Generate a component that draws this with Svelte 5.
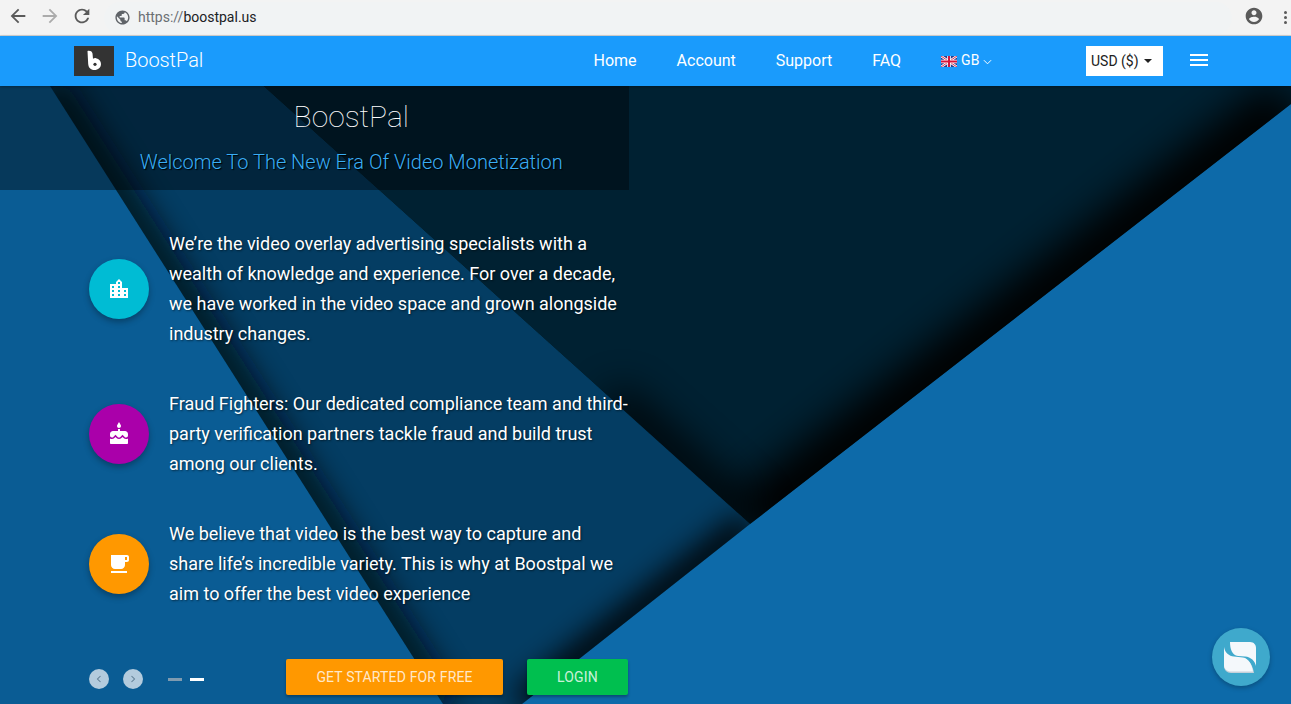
<script>
  const items = [
    {
      color: 'cyan',
      icon: 'M15 11V5l-3-3-3 3v2H3v14h18V11h-6zm-8 8H5v-2h2v2zm0-4H5v-2h2v2zm0-4H5V9h2v2zm6 8h-2v-2h2v2zm0-4h-2v-2h2v2zm0-4h-2V9h2v2zm0-4h-2V5h2v2zm6 12h-2v-2h2v2zm0-4h-2v-2h2v2z',
      text: 'We’re the video overlay advertising specialists with a wealth of knowledge and experience. For over a decade, we have worked in the video space and grown alongside industry changes.'
    },
    {
      color: 'purple',
      icon: 'M12 6c1.11 0 2-.9 2-2 0-.38-.1-.73-.29-1.03L12 0l-1.71 2.97c-.19.3-.29.65-.29 1.03 0 1.1.9 2 2 2zm4.6 9.99l-1.07-1.07-1.08 1.07c-1.3 1.3-3.58 1.31-4.89 0l-1.07-1.07-1.09 1.07C6.75 16.64 5.88 17 4.96 17c-.73 0-1.4-.23-1.96-.61V21c0 .55.45 1 1 1h16c.55 0 1-.45 1-1v-4.61c-.56.38-1.23.61-1.96.61-.92 0-1.79-.36-2.44-1.01zM18 9h-5V7h-2v2H6c-1.66 0-3 1.34-3 3v1.54c0 1.08.88 1.96 1.96 1.96.52 0 1.02-.2 1.38-.57l2.14-2.13 2.13 2.13c.74.74 2.03.74 2.77 0l2.14-2.13 2.13 2.13c.37.37.86.57 1.38.57 1.08 0 1.96-.88 1.96-1.96V12C21 10.34 19.66 9 18 9z',
      text: 'Fraud Fighters: Our dedicated compliance team and third-party verification partners tackle fraud and build trust among our clients.'
    },
    {
      color: 'orange',
      icon: 'M20 3H4v10c0 2.21 1.79 4 4 4h6c2.21 0 4-1.79 4-4v-3h2c1.11 0 2-.9 2-2V5c0-1.11-.89-2-2-2zm0 5h-2V5h2v3zM4 19h16v2H4z',
      text: 'We believe that video is the best way to capture and share life’s incredible variety. This is why at Boostpal we aim to offer the best video experience'
    }
  ];
  const links = ['Home', 'Account', 'Support', 'FAQ'];
</script>

<div class="page">
  <div class="toolbar">
    <svg class="tb-icon" viewBox="0 0 24 24"><path fill="#5a5a5a" d="M20 11H7.83l5.59-5.59L12 4l-8 8 8 8 1.41-1.41L7.83 13H20v-2z"/></svg>
    <svg class="tb-icon" viewBox="0 0 24 24"><path fill="#ababab" d="M4 11h12.17l-5.59-5.59L12 4l8 8-8 8-1.41-1.41L16.17 13H4v-2z"/></svg>
    <svg class="tb-icon" viewBox="0 0 24 24"><path fill="#5a5a5a" d="M17.65 6.35C16.2 4.9 14.21 4 12 4c-4.42 0-7.99 3.58-7.99 8s3.57 8 7.99 8c3.73 0 6.84-2.55 7.73-6h-2.08c-.82 2.33-3.04 4-5.65 4-3.31 0-6-2.69-6-6s2.69-6 6-6c1.66 0 3.14.69 4.22 1.78L13 11h7V4l-2.35 2.35z"/></svg>
    <div class="omnibox">
      <svg class="globe" viewBox="0 0 24 24"><path fill="#5f6368" d="M12 2C6.48 2 2 6.48 2 12s4.48 10 10 10 10-4.48 10-10S17.52 2 12 2zm-1 17.93c-3.95-.49-7-3.85-7-7.93 0-.62.08-1.21.21-1.79L9 15v1c0 1.1.9 2 2 2v1.93zm6.9-2.54c-.26-.81-1-1.39-1.9-1.39h-1v-3c0-.55-.45-1-1-1H8v-2h2c.55 0 1-.45 1-1V7h2c1.1 0 2-.9 2-2v-.41c2.93 1.19 5 4.06 5 7.41 0 2.08-.8 3.97-2.1 5.39z"/></svg>
      <span class="url"><span class="scheme">https://</span>boostpal.us</span>
    </div>
    <svg class="account" viewBox="0 0 24 24"><path fill="#5a5a5a" d="M12 2C6.48 2 2 6.48 2 12s4.48 10 10 10 10-4.48 10-10S17.52 2 12 2zm0 3c1.66 0 3 1.34 3 3s-1.34 3-3 3-3-1.34-3-3 1.34-3 3-3zm0 14.2c-2.5 0-4.71-1.28-6-3.22.03-1.99 4-3.08 6-3.08 1.99 0 5.97 1.09 6 3.08-1.29 1.94-3.5 3.22-6 3.22z"/></svg>
    <div class="dots"><i></i><i></i><i></i></div>
  </div>

  <nav class="nav">
    <div class="logo">
      <svg viewBox="0 0 40 30" width="40" height="30">
        <path fill="#fff" d="M13.500 5C15.500 4.500 18 5 18.500 7.500L19 12.700C20 12.200 21 12 22 12.200C25 12.700 27 15 27 18C27 21.500 24 24 20.500 24C16.500 24 14.500 21.500 14.200 18Z"/>
        <circle cx="21" cy="18.300" r="1.600" fill="#333"/>
      </svg>
    </div>
    <span class="brand">BoostPal</span>
    <div class="links">
      {#each links as link}
        <span>{link}</span>
      {/each}
      <span class="lang">
        <svg class="flag" viewBox="0 0 16 11" width="16" height="11">
          <rect width="16" height="11" fill="#2b3a8c"/>
          <path d="M0 0L16 11M16 0L0 11" stroke="#fff" stroke-width="2.400"/>
          <path d="M0 0L16 11M16 0L0 11" stroke="#d8143a" stroke-width="0.900"/>
          <path d="M8 0V11M0 5.500H16" stroke="#fff" stroke-width="3.600"/>
          <path d="M8 0V11M0 5.500H16" stroke="#d8143a" stroke-width="2"/>
        </svg>
        GB
        <svg class="chev" viewBox="0 0 10 6" width="9" height="6"><path d="M1 1l4 4 4-4" fill="none" stroke="#fff" stroke-width="1.100"/></svg>
      </span>
    </div>
    <div class="currency">USD ($)<i class="caret"></i></div>
    <div class="burger"><i></i><i></i><i></i></div>
  </nav>

  <main class="hero">
    <svg class="backdrop" viewBox="0 0 1291 618" width="1291" height="618">
      <defs>
        <filter id="blur-lg" filterUnits="userSpaceOnUse" x="-100" y="-100" width="1500" height="900">
          <feGaussianBlur stdDeviation="20"/>
        </filter>
        <filter id="blur-md" filterUnits="userSpaceOnUse" x="-100" y="-100" width="1500" height="900">
          <feGaussianBlur stdDeviation="15"/>
        </filter>
        <clipPath id="clip-dark"><polygon points="263,0 750,438 1291,18 1291,0"/></clipPath>
        <clipPath id="clip-mid"><polygon points="50,0 443,618 522,618 750,438 263,0"/></clipPath>
      </defs>
      <rect width="1291" height="618" fill="#0d6aa9"/>
      <polygon points="0,0 50,0 443,618 0,618" fill="#0a5c94"/>

      <g clip-path="url(#clip-mid)">
        <rect width="1291" height="618" fill="#043d63"/>
        <path d="M50 0L443 618" fill="none" stroke="#000d15" stroke-width="30" opacity="0.9" filter="url(#blur-md)"/>
        <path d="M750 438L522 618" fill="none" stroke="#000" stroke-width="28" filter="url(#blur-md)"/>
      </g>

      <g clip-path="url(#clip-dark)">
        <rect width="1291" height="618" fill="#002132"/>
        <path d="M750 438L1291 18" fill="none" stroke="#000" stroke-width="62" filter="url(#blur-lg)"/>
        <path d="M610 312L750 438" fill="none" stroke="#000" stroke-width="34" opacity="0.9" filter="url(#blur-lg)"/>
      </g>
    </svg>

    <header class="band">
      <h1>BoostPal</h1>
      <h2>Welcome To The New Era Of Video Monetization</h2>
    </header>

    <div class="list">
      {#each items as item}
        <div class="item">
          <div class="badge {item.color}">
            <svg viewBox="0 0 24 24" width="24" height="24"><path fill="#fff" d={item.icon}/></svg>
          </div>
          <p>{item.text}</p>
        </div>
      {/each}
    </div>

    <div class="actions">
      <div class="pager">
        <span class="round"><svg viewBox="0 0 8 10" width="6" height="8"><path d="M6 1L2 5l4 4" fill="none" stroke="#5f7d93" stroke-width="1.400"/></svg></span>
        <span class="round"><svg viewBox="0 0 8 10" width="6" height="8"><path d="M2 1l4 4-4 4" fill="none" stroke="#5f7d93" stroke-width="1.400"/></svg></span>
        <span class="dash off"></span>
        <span class="dash"></span>
      </div>
      <button class="btn start">GET STARTED FOR FREE</button>
      <button class="btn login">LOGIN</button>
    </div>

    <div class="chat">
      <svg viewBox="0 0 58 58" width="58" height="58">
        <path fill="#c6d1da" d="M12 21C13 27 17 29 22 30L33 31C38 32 41 39 42 45H19C15 45 12 42 12 38Z"/>
        <path fill="#f4f8fb" d="M18 14H38C42 14 44 17 44 20V38C43 33 39 29 33 28.500L26 28C20 27 18 21 18 14Z"/>
        <path fill="#f4f8fb" d="M12 19C13 25 17 28 22 28.500L31 29.500C37 30.500 40 37 41 43.500H19C15 43.500 12 41 12 37Z"/>
      </svg>
    </div>
  </main>
</div>

<style>
  :global(body) {
    margin: 0;
    font-family: Roboto, sans-serif;
  }

  .page {
    width: 1291px;
    height: 704px;
    overflow: hidden;
    display: flex;
    flex-direction: column;
  }

  .toolbar {
    height: 35px;
    flex: none;
    display: flex;
    align-items: center;
    background: #f3f3f3;
    border-bottom: 1px solid #d4d4d4;
    padding-left: 7px;
  }

  .tb-icon {
    width: 22px;
    height: 22px;
    margin: 0 10px 3px 0;
  }

  .omnibox {
    width: 1128px;
    height: 32px;
    margin-left: 1px;
    padding: 0 0 1px 10px;
    border-radius: 16px;
    background: #f1f3f4;
    display: flex;
    align-items: center;
    box-sizing: border-box;
  }

  .globe {
    width: 17px;
    height: 17px;
  }

  .url {
    margin-left: 7px;
    font-size: 14px;
    color: #202124;
  }

  .scheme {
    color: #6b6f73;
  }

  .account {
    width: 20px;
    height: 20px;
    margin: 0 0 4px 11.5px;
  }

  .dots {
    margin-left: 20.5px;
    display: flex;
    flex-direction: column;
    gap: 2px;
  }

  .dots i {
    display: block;
    width: 3px;
    height: 3px;
    border-radius: 50%;
    background: #5a5a5a;
  }

  .nav {
    height: 50px;
    flex: none;
    display: flex;
    align-items: center;
    background: #1a9bfc;
    color: #fff;
    padding-left: 74px;
    position: relative;
    z-index: 2;
    box-shadow: 0 1px 3px rgba(0, 0, 0, 0.3);
  }

  .logo {
    width: 40px;
    height: 30px;
    background: #333;
  }

  .logo svg {
    display: block;
  }

  .brand {
    margin: 0 0 2px 11px;
    font-size: 20px;
    font-weight: 300;
    width: 468.500px;
    letter-spacing: -0.05px;
  }

  .links {
    display: flex;
    align-items: center;
    gap: 40px;
    font-size: 16px;
    width: 492.500px;
    margin-bottom: 2px;
  }

  .lang {
    display: flex;
    align-items: center;
    font-size: 14px;
  }

  .flag {
    margin: 2px 4px 0 0;
  }

  .chev {
    margin-left: 4px;
    margin-top: 3px;
  }

  .currency {
    width: 77px;
    height: 30px;
    box-sizing: border-box;
    background: #fff;
    color: #212121;
    font-size: 14px;
    display: flex;
    align-items: center;
    padding-left: 5px;
  }

  .caret {
    margin-left: 5px;
    border-top: 4px solid #212121;
    border-left: 4px solid transparent;
    border-right: 4px solid transparent;
  }

  .burger {
    margin: 0 0 2px 27px;
    display: flex;
    flex-direction: column;
    gap: 3px;
  }

  .burger i {
    display: block;
    width: 18px;
    height: 2px;
    background: #fff;
  }

  .hero {
    flex: 1;
    position: relative;
    overflow: hidden;
    color: #fff;
  }

  .backdrop {
    position: absolute;
    inset: 0;
    display: block;
  }

  .band,
  .list,
  .actions {
    position: relative;
  }

  .band {
    width: 629px;
    height: 104px;
    box-sizing: border-box;
    padding-left: 73.500px;
    background: rgba(0, 0, 0, 0.38);
    text-align: center;
  }

  h1 {
    margin: 0;
    padding-top: 12px;
    font-size: 30px;
    line-height: 38px;
    font-weight: 100;
  }

  h2 {
    margin: 13px 0 0;
    font-size: 20px;
    line-height: 26px;
    font-weight: 300;
    color: #3aaef5;
    text-shadow: 1px 1px 1px #000;
  }

  .list {
    margin-top: 39px;
    display: flex;
    flex-direction: column;
    gap: 40px;
    padding-left: 89px;
  }

  .item {
    display: flex;
    align-items: center;
    gap: 20px;
  }

  .badge {
    width: 60px;
    height: 60px;
    flex: none;
    border-radius: 50%;
    display: flex;
    align-items: center;
    justify-content: center;
    box-shadow: 0 3px 6px rgba(0, 0, 0, 0.3);
  }

  .cyan { background: #00bcd4; }
  .purple { background: #aa00aa; }
  .orange { background: #ff9800; }

  p {
    margin: 0;
    width: 461px;
    font-size: 18px;
    line-height: 30px;
    text-shadow: 1px 1px 2px rgba(0, 0, 0, 0.5);
  }

  .actions {
    margin-top: 50px;
    height: 36px;
    display: flex;
    align-items: center;
    padding-left: 89px;
  }

  .pager {
    display: flex;
    align-items: center;
    width: 197px;
    padding-top: 4px;
  }

  .round {
    width: 20px;
    height: 20px;
    border-radius: 50%;
    background: #b3cbdd;
    display: flex;
    align-items: center;
    justify-content: center;
    margin-right: 14px;
  }

  .round + .round {
    margin-right: 25px;
  }

  .dash {
    width: 14px;
    height: 3px;
    background: #fff;
  }

  .dash.off {
    background: #7f9bb0;
    margin-right: 8px;
  }

  .btn {
    height: 36px;
    border: 0;
    border-radius: 2px;
    color: rgba(255, 255, 255, 0.8);
    font-family: Roboto, sans-serif;
    font-size: 14px;
    letter-spacing: 0.15px;
    box-shadow: 0 2px 3px rgba(0, 0, 0, 0.3);
    padding: 0;
  }

  .start {
    width: 217px;
    background: #ff9800;
    margin-right: 24px;
  }

  .login {
    width: 101px;
    background: #00bf4f;
  }

  .chat {
    position: absolute;
    left: 1212px;
    top: 542px;
    width: 58px;
    height: 58px;
    border-radius: 50%;
    background: #3fa9cc;
    box-shadow: 0 2px 5px rgba(0, 0, 0, 0.25);
  }

  .chat svg {
    display: block;
  }
</style>
